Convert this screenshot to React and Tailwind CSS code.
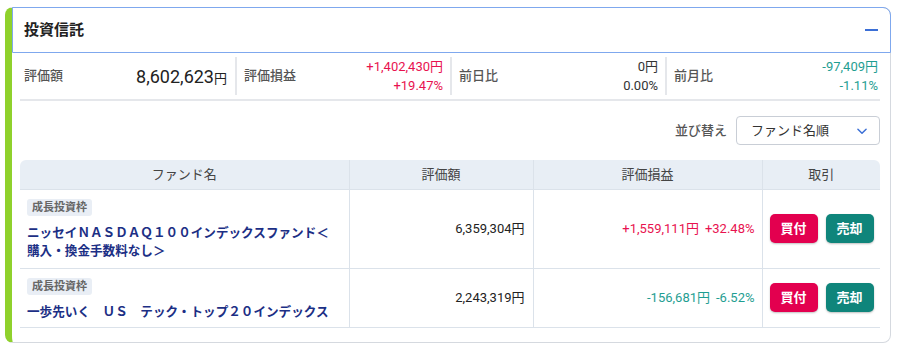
import React from 'react';

const font = { fontFamily: "Roboto, 'Noto Sans CJK JP', sans-serif" };

const Summary = ({ label, children, first, last }) => (
  <div
    className={`flex items-center justify-between h-[38px] ${
      first ? 'pl-1 pr-2' : last ? 'border-l-2 border-gray-200 pl-[7px] pr-[2px]' : 'border-l-2 border-gray-200 pl-[7px] pr-[7px]'
    }`}
  >
    <span className="text-[13px] text-[#555] font-medium">{label}</span>
    <div className="text-right">{children}</div>
  </div>
);

const Badge = () => (
  <span className="inline-block bg-[#e9eef5] text-[#666] text-[11px] font-bold px-[5px] py-[1px] rounded-[3px] leading-[15px]">成長投資枠</span>
);

const rows = [
  {
    name: ['ニッセイＮＡＳＤＡＱ１００インデックスファンド＜', '購入・換金手数料なし＞'],
    value: '6,359,304円',
    gain: '+1,559,111円',
    pct: '+32.48%',
    up: true,
    h: 'h-[79px]',
  },
  {
    name: ['一歩先いく　ＵＳ　テック・トップ２０インデックス'],
    value: '2,243,319円',
    gain: '-156,681円',
    pct: '-6.52%',
    up: false,
    h: 'h-[59px]',
  },
];

export default function App() {
  return (
    <div style={font} className="bg-white w-[900px] h-[352px] pt-[7px] pl-[5px] pr-[9px]">
      <div className="rounded-lg border border-[#d5d9df] border-l-[7px] border-l-[#8fd12c] bg-white">
        {/* header */}
        <div className="-mt-px -mr-px flex items-center justify-between h-[46px] border border-[#7fa8ee] rounded-tr-lg pl-[11px] pr-[12px]">
          <span className="text-[15px] font-bold text-[#222]">投資信託</span>
          <span className="block w-[13px] h-[2px] bg-[#3b6fd6]"></span>
        </div>

        <div className="pl-2 pr-[10px] pb-[14px]">
          {/* summary */}
          <div className="grid grid-cols-4 pt-[4px] pb-[4px] border-b-2 border-gray-200">
            <Summary label="評価額" first>
              <span className="text-[18px] text-[#222]">8,602,623</span>
              <span className="text-[13px] text-[#222]">円</span>
            </Summary>
            <Summary label="評価損益">
              <div className="text-[13px] leading-[19px] text-[#e8124f]">+1,402,430円</div>
              <div className="text-[13px] leading-[19px] text-[#e8124f]">+19.47%</div>
            </Summary>
            <Summary label="前日比">
              <div className="text-[13px] leading-[19px] text-[#333]">0円</div>
              <div className="text-[13px] leading-[19px] text-[#333]">0.00%</div>
            </Summary>
            <Summary label="前月比" last>
              <div className="text-[13px] leading-[19px] text-[#1f9e92]">-97,409円</div>
              <div className="text-[13px] leading-[19px] text-[#1f9e92]">-1.11%</div>
            </Summary>
          </div>

          {/* sort */}
          <div className="flex items-center justify-end gap-[9px] mt-[15px] mb-[15px]">
            <span className="text-[13px] text-[#555] font-medium">並び替え</span>
            <div className="flex items-center justify-between w-[144px] h-[29px] border border-[#c9ced6] rounded-[4px] pl-[14px] pr-[10px]">
              <span className="text-[13px] text-[#333]">ファンド名順</span>
              <svg width="14" height="14" viewBox="0 0 24 24" fill="none" stroke="#3b6fd6" strokeWidth="2.5" strokeLinecap="round" strokeLinejoin="round">
                <path d="M5 9l7 7 7-7" />
              </svg>
            </div>
          </div>

          {/* table */}
          <table className="w-full border-collapse text-[13px]">
            <thead>
              <tr className="bg-[#e8eef5] h-[29px] text-[#444]">
                <th className="font-normal w-[329px] rounded-tl-md border-r border-[#dbe2ea]">ファンド名</th>
                <th className="font-normal w-[184px] border-r border-[#dbe2ea]">評価額</th>
                <th className="font-normal w-[229px] border-r border-[#dbe2ea]">評価損益</th>
                <th className="font-normal rounded-tr-md">取引</th>
              </tr>
            </thead>
            <tbody>
              {rows.map((r, i) => (
                <tr key={i} className={`${r.h} border-t border-b border-[#dbe2ea]`}>
                  <td className="align-top pl-[7px] pt-[7px] border-r border-[#dbe2ea]">
                    <Badge />
                    <div className="mt-[8px] text-[12.6px] font-bold text-[#1c2f85] leading-[18px]">
                      {r.name.map((n, j) => (
                        <div key={j}>{n}</div>
                      ))}
                    </div>
                  </td>
                  <td className="text-right pr-[8px] text-[#222] border-r border-[#dbe2ea]">{r.value}</td>
                  <td className={`text-right pr-[7px] border-r border-[#dbe2ea] ${r.up ? 'text-[#e8124f]' : 'text-[#1f9e92]'}`}>
                    {r.gain}
                    <span className="ml-[6px]">{r.pct}</span>
                  </td>
                  <td className="pl-[7px]">
                    <div className="flex gap-[8px]">
                      <button className="w-[48px] h-[29px] rounded-[5px] bg-[#e3004f] text-white text-[13px] font-bold shadow-[0_1px_2px_rgba(0,0,0,0.25)]">買付</button>
                      <button className="w-[48px] h-[29px] rounded-[5px] bg-[#0f857b] text-white text-[13px] font-bold shadow-[0_1px_2px_rgba(0,0,0,0.25)]">売却</button>
                    </div>
                  </td>
                </tr>
              ))}
            </tbody>
          </table>
        </div>
      </div>
    </div>
  );
}
